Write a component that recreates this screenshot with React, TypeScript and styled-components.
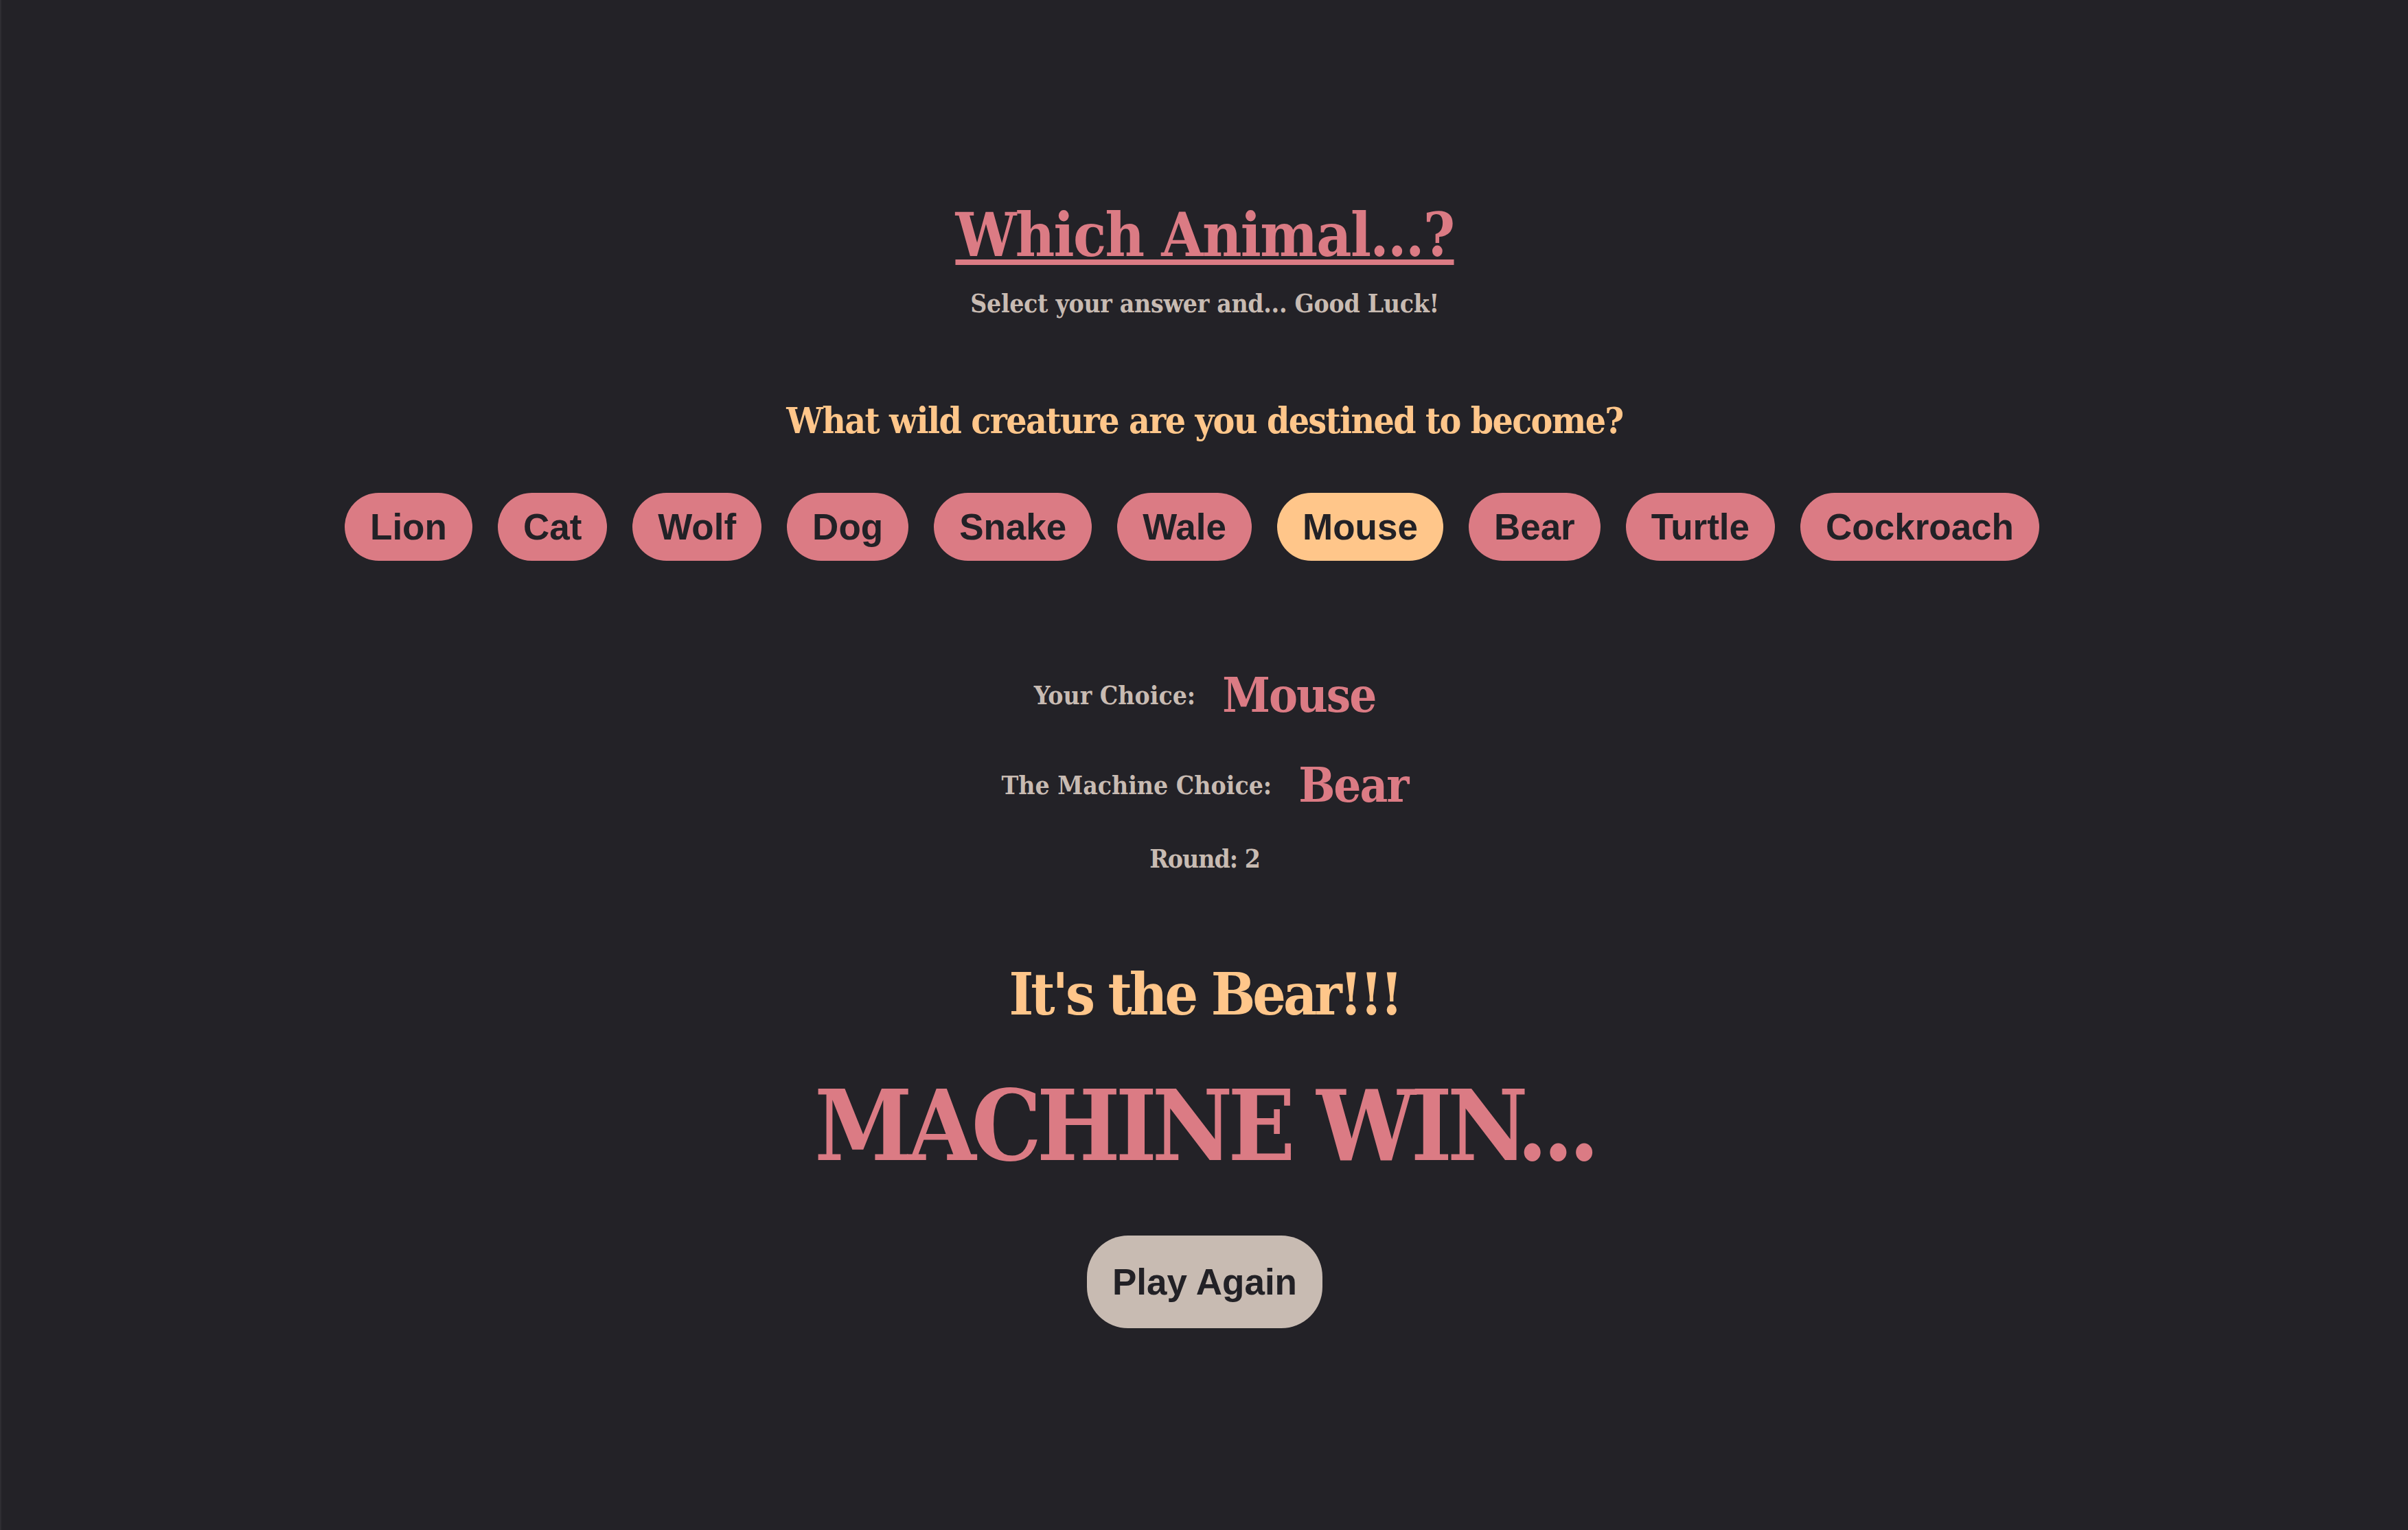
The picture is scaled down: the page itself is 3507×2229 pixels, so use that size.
import React from 'react'
import styled, { createGlobalStyle } from 'styled-components'

const palette = {
  background: '#232227',
  pink: '#db7b84',
  peach: '#ffc68a',
  sand: '#c8bbb2',
  ink: '#222126',
}

const slab = '"DejaVu Serif Condensed", "DejaVu Serif", serif'

const GlobalStyle = createGlobalStyle`
  html, body {
    margin: 0;
    padding: 0;
    background: ${palette.background};
  }
`

const Page = styled.div`
  min-height: 2229px;
  box-sizing: border-box;
  border-left: 2px solid #2e2d32;
  display: flex;
  flex-direction: column;
  align-items: center;
  padding-top: 298px;
  font-family: ${slab};
  font-stretch: condensed;
`

const Title = styled.h1`
  margin: 0;
  font-size: 88px;
  line-height: 1;
  font-weight: 700;
  letter-spacing: -1.7px;
  color: ${palette.pink};
  text-decoration: underline;
  text-decoration-thickness: 8px;
  text-underline-offset: 5px;
`

const Subtitle = styled.p`
  margin: 38px 0 0;
  font-size: 37px;
  line-height: 1;
  font-weight: 700;
  letter-spacing: -0.3px;
  color: ${palette.sand};
`

const Question = styled.h2`
  margin: 125px 0 0;
  font-size: 53px;
  line-height: 1;
  font-weight: 700;
  letter-spacing: -1.6px;
  color: ${palette.peach};
`

const Options = styled.div`
  margin-top: 79px;
  display: flex;
  justify-content: center;
`

const Pill = styled.button<{ $active?: boolean; $big?: boolean }>`
  margin: 0 ${(p) => (p.$big ? '0' : '37px')} 0 0;
  padding: ${(p) => (p.$big ? '37px' : '19px 37px')};
  border: none;
  border-radius: 60px;
  font-family: "Liberation Sans", Arial, sans-serif;
  font-stretch: normal;
  font-size: 53px;
  font-weight: 700;
  color: ${palette.ink};
  background: ${(p) => (p.$big ? palette.sand : p.$active ? palette.peach : palette.pink)};
  cursor: pointer;
`

const ChoiceRow = styled.div<{ $first?: boolean }>`
  margin-top: ${(p) => (p.$first ? '161px' : '61px')};
  display: flex;
  align-items: center;
  gap: 39px;
`

const Label = styled.span`
  font-size: 37px;
  line-height: 1;
  font-weight: 700;
  color: ${palette.sand};
`

const Value = styled.span`
  font-size: 70px;
  line-height: 1;
  font-weight: 700;
  letter-spacing: -2px;
  color: ${palette.pink};
`

const Round = styled.p`
  margin: 54px 0 0;
  font-size: 37px;
  line-height: 1;
  font-weight: 700;
  letter-spacing: -1px;
  color: ${palette.sand};
`

const Reveal = styled.h2`
  margin: 136px 0 0;
  font-size: 85px;
  line-height: 1;
  font-weight: 700;
  letter-spacing: -4px;
  color: ${palette.peach};
`

const Verdict = styled.h1`
  margin: 78px 0 88px;
  font-size: 143px;
  line-height: 1;
  font-weight: 700;
  letter-spacing: -7px;
  color: ${palette.pink};
`

const animals = ['Lion', 'Cat', 'Wolf', 'Dog', 'Snake', 'Wale', 'Mouse', 'Bear', 'Turtle', 'Cockroach']

const App: React.FC = () => {
  const [choice, setChoice] = React.useState('Mouse')
  const machine = 'Bear'
  const round = 2

  return (
    <>
      <GlobalStyle />
      <Page>
        <Title>Which Animal...?</Title>
        <Subtitle>Select your answer and... Good Luck!</Subtitle>
        <Question>What wild creature are you destined to become?</Question>
        <Options>
          {animals.map((a) => (
            <Pill key={a} $active={a === choice} onClick={() => setChoice(a)}>
              {a}
            </Pill>
          ))}
        </Options>
        <ChoiceRow $first>
          <Label>Your Choice:</Label>
          <Value>{choice}</Value>
        </ChoiceRow>
        <ChoiceRow>
          <Label>The Machine Choice:</Label>
          <Value>{machine}</Value>
        </ChoiceRow>
        <Round>Round: {round}</Round>
        <Reveal>It's the {machine}!!!</Reveal>
        <Verdict>MACHINE WIN...</Verdict>
        <Pill $big>Play Again</Pill>
      </Page>
    </>
  )
}

export default App
